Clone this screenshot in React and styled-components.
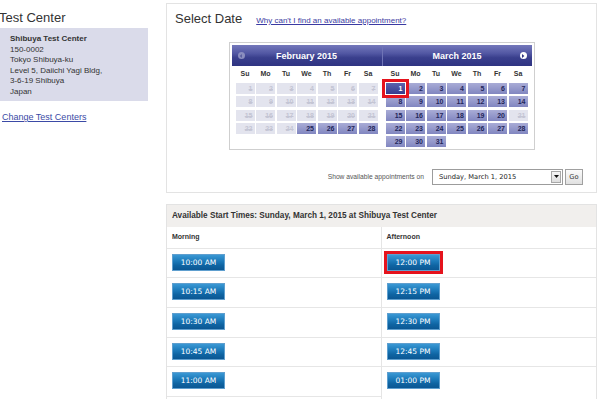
import React from 'react'
import styled, { createGlobalStyle, css } from 'styled-components'

const GlobalStyle = createGlobalStyle`
  html, body { margin: 0; padding: 0; background: #fff; }
  body { font-family: "Liberation Sans", Arial, sans-serif; color: #333; }
`

const feb = { name: 'February 2015', enabled: [25, 26, 27, 28], days: 28 }
const mar = { name: 'March 2015', enabled: null, disabled: [21], days: 31 }
const dayNames = ['Su', 'Mo', 'Tu', 'We', 'Th', 'Fr', 'Sa']
// the 11:15 AM slot sits below the fold, only its top rule shows
const morning = ['10:00 AM', '10:15 AM', '10:30 AM', '10:45 AM', '11:00 AM', null]
const afternoon = ['12:00 PM', '12:15 PM', '12:30 PM', '12:45 PM', '01:00 PM']

const Page = styled.div`
  display: flex;
  align-items: flex-start;
  gap: 18px;
  width: 600px;
  height: 399px;
  overflow: hidden;
`
const Sidebar = styled.aside`
  width: 148px;
  flex-shrink: 0;
  padding-top: 10px;
`
const SideTitle = styled.h2`
  margin: 0 0 3px -1px;
  font-size: 13px;
  line-height: 15px;
  font-weight: normal;
  color: #333;
`
const AddressBox = styled.div`
  background: #dadbea;
  padding: 6px 10px 4px;
  font-size: 8px;
  line-height: 10.5px;
  color: #333;
  b { font-weight: bold; }
`
const SideLink = styled.a`
  display: block;
  margin: 10px 0 0 2px;
  font-size: 9px;
  line-height: 12px;
  color: #3b4aa6;
  text-decoration: underline;
`
const Main = styled.main`
  width: 431px;
  flex-shrink: 0;
  padding-top: 3px;
`
const Panel = styled.section`
  border: 1px solid #e3e3e3;
  ${({ $top }) => $top && css`margin-top: ${$top}px;`}
`
const DatePanel = styled(Panel)`
  display: flex;
  flex-direction: column;
  padding-bottom: 7px;
`
const TitleRow = styled.div`
  display: flex;
  align-items: baseline;
  gap: 14px;
  padding: 7px 8px 0;
`
const PanelTitle = styled.h1`
  margin: 0;
  font-size: 13px;
  line-height: 15px;
  font-weight: normal;
  color: #333;
`
const HelpLink = styled.a`
  font-size: 8px;
  color: #3a3aa2;
  text-decoration: underline;
`
const Calendar = styled.div`
  align-self: center;
  margin-top: 16px;
  width: 306px;
  box-sizing: border-box;
  border: 1px solid #cfcfcf;
  padding: 2px;
  display: flex;
`
const Month = styled.div`
  width: 150px;
`
const MonthHeader = styled.div`
  position: relative;
  height: 21px;
  display: flex;
  align-items: center;
  justify-content: center;
  background: linear-gradient(180deg, #7478bb 0%, #5257a3 40%, #3a3f8d 60%, #2f3482 100%);
  border-left: ${({ $divider }) => ($divider ? '1px solid #6f74b6' : 'none')};
  color: #fff;
  font-weight: bold;
  font-size: 9px;
`
const NavIcon = styled.span`
  position: absolute;
  top: 7px;
  ${({ $side }) => ($side === 'prev' ? 'left: 6px;' : 'right: 5px;')}
  width: 7px;
  height: 7px;
  border-radius: 50%;
  background: ${({ $disabled }) => ($disabled ? '#8b8ebf' : '#fff')};
  display: flex;
  align-items: center;
  justify-content: center;
`
const DayNames = styled.div`
  display: grid;
  grid-template-columns: repeat(7, 19px);
  column-gap: 1.5px;
  justify-content: center;
  height: 15px;
  align-items: center;
  text-align: center;
  font-size: 7px;
  font-weight: bold;
  color: #333;
`
const DayGrid = styled.div`
  display: grid;
  grid-template-columns: repeat(7, 19px);
  grid-auto-rows: 11px;
  column-gap: 1.5px;
  row-gap: 2.3px;
  justify-content: center;
  margin-top: 2px;
  height: 64.2px;
`
const Day = styled.div`
  box-sizing: border-box;
  padding-right: 2px;
  text-align: right;
  font-size: 7px;
  line-height: 11px;
  font-weight: bold;
  ${({ $state }) => $state === 'off' && css`
    background: #e3e4ee;
    color: #c4c5d4;
    text-decoration: line-through;
  `}
  ${({ $state }) => $state === 'on' && css`
    background: linear-gradient(180deg, #a9acd6, #8186c0);
    color: #23265a;
  `}
  ${({ $state }) => $state === 'selected' && css`
    position: relative;
    z-index: 1;
    background: linear-gradient(180deg, #5d62ad, #353b8e);
    color: #fff;
    outline: 3px solid #e5131d;
    outline-offset: 1px;
  `}
`
const Controls = styled.div`
  display: flex;
  align-items: center;
  justify-content: flex-end;
  margin-top: 18px;
  padding-right: 13px;
  height: 17px;
`
const ControlLabel = styled.span`
  font-size: 6.7px;
  color: #555;
  margin-right: 8px;
`
const SelectBox = styled.div`
  width: 131px;
  height: 16px;
  box-sizing: border-box;
  border: 1px solid #9c9c9c;
  display: flex;
  align-items: center;
  justify-content: space-between;
  padding-left: 6px;
  font-family: "DejaVu Sans", Verdana, sans-serif;
  font-size: 6.7px;
  color: #222;
`
const SelectArrow = styled.span`
  width: 10px;
  height: 12px;
  margin-right: 1px;
  box-sizing: border-box;
  border: 1px solid #a8a8a8;
  background: linear-gradient(#f6f6f6, #dedede);
  display: flex;
  align-items: center;
  justify-content: center;
`
const GoButton = styled.button`
  margin-left: 2px;
  width: 18px;
  height: 16px;
  padding: 0;
  border: 1px solid #a0a0a0;
  background: linear-gradient(#fbfbfb, #e1e1e1);
  font-family: "DejaVu Sans", Verdana, sans-serif;
  font-size: 6.7px;
  color: #333;
`
const TimesHeader = styled.div`
  height: 22px;
  line-height: 22px;
  padding-left: 5px;
  background: #f1efed;
  font-size: 8.2px;
  font-weight: bold;
  color: #333;
`
const TimesGrid = styled.div`
  display: grid;
  grid-template-columns: 1fr 1fr;
  height: 180px;
`
const Column = styled.div`
  border-right: ${({ $divider }) => ($divider ? '1px solid #e5e5e5' : 'none')};
`
const ColumnHead = styled.div`
  height: 20.7px;
  line-height: 20.7px;
  padding-left: 5px;
  font-size: 7px;
  font-weight: bold;
  color: #333;
`
const Slot = styled.div`
  border-top: 1px solid #e6e6e6;
  padding: 5px 5px 6.6px;
  min-height: 17px;
`
const TimeButton = styled.button`
  display: block;
  width: 53px;
  height: 17px;
  padding: 0;
  border: 1px solid #5f9fcf;
  background: linear-gradient(180deg, #3a98d4 0%, #1a77b7 45%, #0f64a2 70%, #0b5793 100%);
  color: #fff;
  font-family: "DejaVu Sans", Verdana, sans-serif;
  font-size: 7.5px;
  ${({ $marked }) => $marked && css`
    outline: 3px solid #e5131d;
    outline-offset: 0.5px;
  `}
`

const Arrow = ({ dir, color }) => (
  <svg width="4" height="4" viewBox="0 0 4 4">
    <path d={dir === 'left' ? 'M3 0 L0.6 2 L3 4 Z' : 'M1 0 L3.4 2 L1 4 Z'} fill={color} />
  </svg>
)

const MonthView = ({ month, first, divider }) => {
  const cells = []
  for (let d = 1; d <= month.days; d++) {
    let state = 'on'
    if (month.enabled && !month.enabled.includes(d)) state = 'off'
    if (month.disabled && month.disabled.includes(d)) state = 'off'
    if (!first && d === 1) state = 'selected'
    cells.push(<Day key={d} $state={state}>{d}</Day>)
  }
  return (
    <Month>
      <MonthHeader $divider={divider}>
        {first && (
          <NavIcon $side="prev" $disabled><Arrow dir="left" color="#5c60a0" /></NavIcon>
        )}
        {month.name}
        {!first && (
          <NavIcon $side="next"><Arrow dir="right" color="#30357f" /></NavIcon>
        )}
      </MonthHeader>
      <DayNames>
        {dayNames.map(n => <span key={n}>{n}</span>)}
      </DayNames>
      <DayGrid>{cells}</DayGrid>
    </Month>
  )
}

const App = () => {
  return (
    <>
      <GlobalStyle />
      <Page>
        <Sidebar>
          <SideTitle>Test Center</SideTitle>
          <AddressBox>
            <b>Shibuya Test Center</b><br />
            150-0002<br />
            Tokyo Shibuya-ku<br />
            Level 5, Daiichi Yagi Bldg,<br />
            3-6-19 Shibuya<br />
            Japan
          </AddressBox>
          <SideLink href="#">Change Test Centers</SideLink>
        </Sidebar>
        <Main>
          <DatePanel>
            <TitleRow>
              <PanelTitle>Select Date</PanelTitle>
              <HelpLink href="#">Why can't I find an available appointment?</HelpLink>
            </TitleRow>
            <Calendar>
              <MonthView month={feb} first />
              <MonthView month={mar} divider />
            </Calendar>
            <Controls>
              <ControlLabel>Show available appointments on</ControlLabel>
              <SelectBox>
                Sunday, March 1, 2015
                <SelectArrow>
                  <svg width="5" height="3" viewBox="0 0 5 3"><path d="M0 0 H5 L2.5 3 Z" fill="#111" /></svg>
                </SelectArrow>
              </SelectBox>
              <GoButton>Go</GoButton>
            </Controls>
          </DatePanel>
          <Panel $top={11}>
            <TimesHeader>Available Start Times: Sunday, March 1, 2015 at Shibuya Test Center</TimesHeader>
            <TimesGrid>
              <Column $divider>
                <ColumnHead>Morning</ColumnHead>
                {morning.map((t, i) => (
                  <Slot key={i}>{t && <TimeButton>{t}</TimeButton>}</Slot>
                ))}
              </Column>
              <Column>
                <ColumnHead>Afternoon</ColumnHead>
                {afternoon.map((t, i) => (
                  <Slot key={t}><TimeButton $marked={i === 0}>{t}</TimeButton></Slot>
                ))}
              </Column>
            </TimesGrid>
          </Panel>
        </Main>
      </Page>
    </>
  )
}

export default App
